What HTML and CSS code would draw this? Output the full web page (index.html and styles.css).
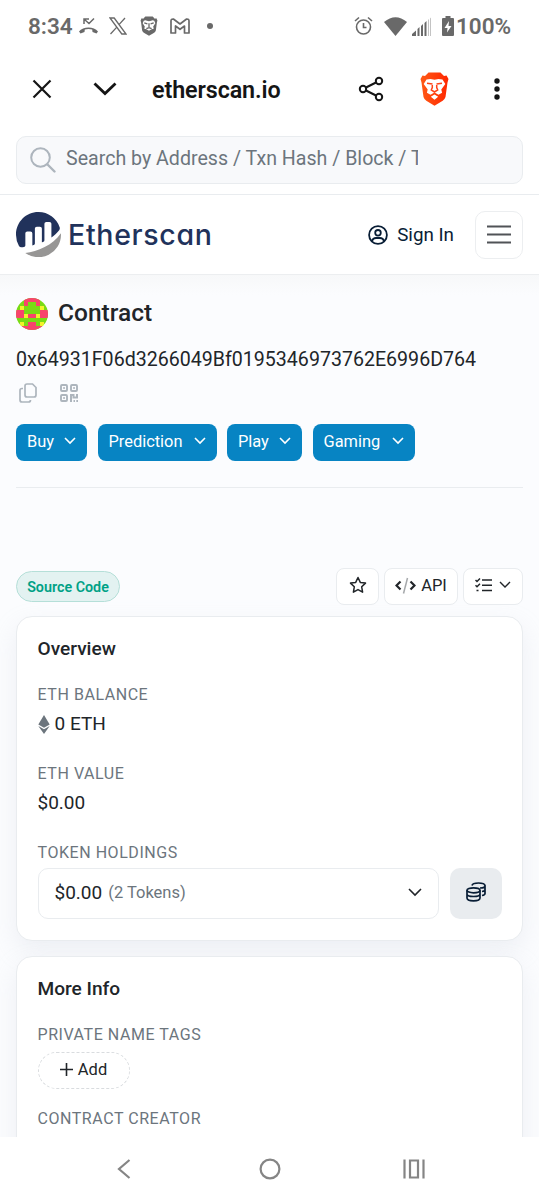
FILE: index.html
```html
<!DOCTYPE html>
<html lang="en">
<head>
<meta charset="utf-8">
<title>Contract | Etherscan</title>
<link rel="stylesheet" href="styles.css">
</head>
<body>
<div class="phone">
  <div class="status">
    <span class="clock">8:34</span>
    <svg class="st-call" width="21" height="18" viewBox="0 0 21 18"><path d="M1 14.500c4-5.500 15-5.500 19 0l-1.500 2-4-1.500-.3-2.600q-3.700-1-7.400 0l-.3 2.600-4 1.500z" fill="currentColor"/><path d="M6 7V2h5M6.500 2.500l4.500 4 5-5" fill="none" stroke="currentColor" stroke-width="1.500"/></svg>
    <svg class="st-x" width="18" height="18" viewBox="0 0 18 18" fill="none" stroke="currentColor" stroke-width="1.300"><path d="M1 1h4.200L17 17h-4.200zM16 1 10 7.600M7.600 10.400 1.500 17"/></svg>
    <svg class="st-brave" width="18" height="20" viewBox="0 0 34 38"><path d="M10 1h14l4 4 3-.5 2 4-1 4-2 15q-1 3-4 5l-9 5-9-5q-3-2-4-5L2 12.500 1 8.500l2-4 3 .5z" fill="currentColor"/><path d="M7 9q3-2 6 0l4 1 4-1q3-2 6 0l2 5-4 6 1 4-4 1-5 3-5-3-4-1 1-4-4-6z" fill="#fff"/><path d="m8 13 6 2M26 13l-6 2M17 14v8m-5 2 5-2 5 2" stroke="currentColor" stroke-width="2.500" fill="none"/></svg>
    <svg class="st-mail" width="20" height="16" viewBox="0 0 20 16"><path d="M1 3q0-2.200 2.400-2L10 6l6.600-5Q19 .8 19 3v12h-4.500V8L10 11.300 5.500 8v7H1z" fill="none" stroke="currentColor" stroke-width="1.700" stroke-linejoin="round"/></svg>
    <span class="st-dot"></span>
    <span class="grow"></span>
    <svg width="19" height="20" viewBox="0 0 19 20" fill="none" stroke="currentColor" stroke-width="1.600"><circle cx="9.500" cy="11" r="7"/><path d="M9.500 7v4.500h3M1 5l4-3.500M18 5l-4-3.500"/></svg>
    <svg class="st-wifi" width="23" height="19" viewBox="0 0 23 19"><path d="M0 5Q11.500-4.500 23 5L11.500 19z" fill="currentColor"/></svg>
    <svg class="st-signal" width="20" height="19" viewBox="0 0 20 19" fill="currentColor"><path d="M0 19v-2l4-3.500V19zM5.500 19v-7l2-2v9zM9 19V9l2-2v12zM12.500 19V6l2-2v15z"/><path d="M16 19V3l1-1v17zM18 19V1.500l1-1V19z" opacity=".4"/></svg>
    <svg class="st-batt" width="12" height="20" viewBox="0 0 12 20"><path d="M3.500 0h5v2H11q1 0 1 1v16q0 1-1 1H1q-1 0-1-1V3q0-1 1-1h2.500z" fill="currentColor"/><path d="M7 5 2.500 12H5.500L5 16.500 9.500 10h-3z" fill="#fff"/></svg>
    <span class="percent">100%</span>
  </div>

  <div class="browser">
    <svg width="20" height="20" viewBox="0 0 20 20"><path d="m1.500 1.500 17 17m0-17-17 17" stroke="currentColor" stroke-width="2.200"/></svg>
    <svg class="br-down" width="24" height="14" viewBox="0 0 24 14"><path d="m1.500 1.500 10.500 10 10.500-10" fill="none" stroke="currentColor" stroke-width="2.800"/></svg>
    <span class="host">etherscan.io</span>
    <span class="grow"></span>
    <svg width="26" height="26" viewBox="0 0 26 26" fill="none" stroke="currentColor" stroke-width="2"><circle cx="5" cy="13" r="3.200"/><circle cx="21" cy="5" r="3.200"/><circle cx="21" cy="21" r="3.200"/><path d="m8 11.500 10-5M8 14.500l10 5"/></svg>
    <svg class="br-brave" width="29" height="34" viewBox="0 0 29 34"><defs><linearGradient id="lion"><stop offset="0" stop-color="#ff5a16"/><stop offset="1" stop-color="#ff2600"/></linearGradient></defs><path d="M8.500.5h12l3.500 3.500 2.500-.5L28.500 7l-1 3.500L25.500 25q-.6 2.200-2.800 3.700l-8.200 5-8.200-5Q4.100 27.200 3.500 25L1.500 10.500.5 7l2-3.500L5 4z" fill="url(#lion)"/><path d="m6.500 7.500 4-.5 4 .8 4-.8 4 .5 2.800 4.500-4 5.500.8 3.300-3.600 2-4-2.300-4 2.300-3.600-2 .8-3.300-4-5.500zM10.800 24.800l3.700-2.300 3.700 2.300-3.700 3z" fill="#fff"/><path d="m7 11.200 5.500.8M22 11.200l-5.500.8M12.300 13v2.500l-1 2.500 3.200 2 3.200-2-1-2.500V13" fill="none" stroke="#ff4318" stroke-width="1.500"/></svg>
    <svg class="br-menu" width="6" height="22" viewBox="0 0 6 22" fill="currentColor"><circle cx="3" cy="3" r="2.700"/><circle cx="3" cy="11" r="2.700"/><circle cx="3" cy="19" r="2.700"/></svg>
  </div>

  <div class="search-area">
    <div class="search">
      <svg width="26" height="26" viewBox="0 0 26 26" fill="none" stroke="#adb5bd" stroke-width="2"><circle cx="10.500" cy="10.500" r="9.300"/><path d="m17.500 17.500 7 7" stroke-width="2.400" stroke-linecap="round"/></svg>
      <span class="placeholder">Search by Address / Txn Hash / Block / Token</span>
    </div>
  </div>

  <header class="site-head">
    <svg width="45" height="45" viewBox="0 0 293.775 293.671"><path d="M61.056 139.480a12.440 12.440 0 0 1 12.498-12.440l20.717.068a12.440 12.440 0 0 1 12.440 12.440v78.331c2.332-.691 5.328-1.430 8.605-2.200a10.368 10.368 0 0 0 7.993-10.090v-97.170a12.440 12.440 0 0 1 12.440-12.441h20.739a12.440 12.440 0 0 1 12.440 12.441v90.183s5.192-2.100 10.249-4.236a10.378 10.378 0 0 0 6.343-9.564V77.326a12.440 12.440 0 0 1 12.438-12.440h20.739a12.440 12.440 0 0 1 12.440 12.440v88.739c17.980-13.031 36.200-28.700 50.661-47.548a20.875 20.875 0 0 0 3.178-19.441A146.830 146.830 0 0 0 147.909.009C65.684-1.088-.009 65.571-.009 147.828a146.600 146.600 0 0 0 19.491 73.450 18.544 18.544 0 0 0 17.718 9.133c3.936-.346 8.837-.836 14.664-1.520a10.356 10.356 0 0 0 9.191-10.284z" fill="#21325b"/><path d="M60.600 266.900a146.833 146.833 0 0 0 233.083-118.900c0-3.381-.157-6.724-.382-10.049-53.642 80-152.686 117.400-232.701 128.949" fill="#979695"/></svg>
    <span class="brand">Etherscan</span>
    <span class="grow"></span>
    <svg width="20" height="20" viewBox="0 0 20 20" fill="none" stroke="#081d35" stroke-width="1.800"><circle cx="10" cy="10" r="8.900"/><circle cx="10" cy="7.800" r="2.800"/><path d="M4 16q1-3 4-3h4q3 0 4 3"/></svg>
    <span class="signin">Sign In</span>
    <span class="burger"><svg width="24" height="19" viewBox="0 0 24 19"><path d="M0 1.500h24M0 9.500h24M0 17.500h24" stroke="#505357" stroke-width="1.800"/></svg></span>
  </header>

  <main>
    <div class="title-row">
      <svg width="32" height="32" viewBox="0 0 8 8" shape-rendering="crispEdges"><path d="M0 0h8v8H0z" fill="#79db14"/><path d="M2 0h4v2H5V1H3v1H2zM0 3h2v2H0zM6 3h2v2H6zM3 4h2v1H3zM3 6h2v1h1v1H2V7h1zM0 7h2v1H0zM6 7h2v1H6z" fill="#f8446c"/><path d="M1 2h1v1H1zM6 2h1v1H6zM2 4h1v1H2zM5 4h1v1H5zM1 6h1v1H1zM6 6h1v1H6z" fill="#f3f32b"/></svg>
      <h1>Contract</h1>
    </div>
    <div class="address">0x64931F06d3266049Bf0195346973762E6996D764</div>
    <div class="tools">
      <svg width="18" height="20" viewBox="0 0 18 20" fill="none" stroke="#adb5bd" stroke-width="1.700"><path d="M8 1h5.500L17 4.500V12q0 2-2 2H8q-2 0-2-2V3q0-2 2-2zM4 5.500H3q-2 0-2 2V17q0 2 2 2h6.500q2 0 2-2"/></svg>
      <svg width="18" height="18" viewBox="0 0 18 18" fill="none" stroke="#adb5bd" stroke-width="1.900"><rect x="1" y="1" width="6" height="6" rx="1"/><rect x="11" y="1" width="6" height="6" rx="1"/><rect x="1" y="11" width="6" height="6" rx="1"/><path d="M3.300 4h1.500M13.300 4h1.500M3.300 14h1.500"/><path d="M11 18v-7h2.500v2.500H17V10M13.500 17h1.500M16.300 17H18" stroke-width="2"/></svg>
    </div>
    <div class="actions">
      <button class="buy">Buy<svg width="12" height="8" viewBox="0 0 12 8"><path d="m1 1 5 5 5-5"/></svg></button>
      <button class="prediction">Prediction<svg width="12" height="8" viewBox="0 0 12 8"><path d="m1 1 5 5 5-5"/></svg></button>
      <button class="play">Play<svg width="12" height="8" viewBox="0 0 12 8"><path d="m1 1 5 5 5-5"/></svg></button>
      <button class="gaming">Gaming<svg width="12" height="8" viewBox="0 0 12 8"><path d="m1 1 5 5 5-5"/></svg></button>
    </div>
    <div class="rule"></div>

    <div class="meta-row">
      <span class="badge">Source Code</span>
      <span class="grow"></span>
      <span class="chip star"><svg width="18" height="18" viewBox="0 0 18 18"><path d="m9 1.500 2.300 4.900 5.200.7-3.800 3.700.9 5.400L9 13.600l-4.600 2.600.9-5.400L1.500 7.100l5.200-.7z" fill="none" stroke="#212529" stroke-width="1.500" stroke-linejoin="round"/></svg></span>
      <span class="chip api"><svg width="21" height="17" viewBox="0 0 21 17" fill="none"><path d="m5.500 4.500-4 4 4 4m10-8 4 4-4 4" stroke="#212529" stroke-width="2.200"/><path d="m12.500 1-4 15.500" stroke="#a5a8ab" stroke-width="1.500"/></svg>API</span>
      <span class="chip list"><svg width="17" height="14" viewBox="0 0 17 14" fill="none" stroke="#212529" stroke-width="1.500"><path d="M7 2h10M7 7.300h10M7 12.600h10M.5 2l1.500 1.500L5 .5M.5 7.200 2 8.700l3-3M1.500 12.600h2"/></svg><svg width="12" height="8" viewBox="0 0 12 8" fill="none" stroke="#212529" stroke-width="1.400"><path d="m1 1 5 5 5-5"/></svg></span>
    </div>

    <section class="card overview">
      <h2>Overview</h2>
      <div class="label">ETH BALANCE</div>
      <div class="value"><svg width="12" height="19" viewBox="0 0 12 19"><path d="m6 0 5.700 9.500L6 12.700.3 9.500z" fill="#6c757d"/><path d="m.3 11 5.700 3.200 5.700-3.200L6 19z" fill="#6c757d"/></svg>0 ETH</div>
      <div class="label">ETH VALUE</div>
      <div class="value">$0.00</div>
      <div class="label">TOKEN HOLDINGS</div>
      <div class="holdings">
        <div class="select"><span class="amount">$0.00</span><span class="count">(2 Tokens)</span><span class="grow"></span><svg width="14" height="9" viewBox="0 0 14 9"><path d="m1 1 6 6 6-6" fill="none" stroke="#212529" stroke-width="1.600"/></svg></div>
        <div class="wallet"><svg width="20" height="20" viewBox="0 0 20 20" fill="none" stroke="#081d35" stroke-width="1.700"><ellipse cx="7.500" cy="8.300" rx="6.500" ry="2.500"/><path d="M1 8.300V16q0 2.800 6.500 2.800T14 16V8.300M1 12q0 2.500 6.500 2.500T14 12M6 3.500Q6.500 1 12.500 1T19 3.500 14 6M19 3.500v8q0 1.500-3 2M19 7.500q0 1.500-3 2"/></svg></div>
      </div>
    </section>

    <section class="card more">
      <h2>More Info</h2>
      <div class="label">PRIVATE NAME TAGS</div>
      <div class="add"><svg width="13" height="13" viewBox="0 0 13 13"><path d="M6.500 0v13M0 6.500h13" stroke="#212529" stroke-width="1.600"/></svg>Add</div>
      <div class="label">CONTRACT CREATOR</div>
    </section>
  </main>

  <nav class="sysnav">
    <svg width="14" height="20" viewBox="0 0 14 20"><path d="m12.500 1-10.500 9 10.500 9" fill="none" stroke="#858585" stroke-width="2.200"/></svg>
    <svg class="home" width="22" height="22" viewBox="0 0 22 22"><circle cx="11" cy="11" r="9.400" fill="none" stroke="#858585" stroke-width="2.200"/></svg>
    <svg width="22" height="20" viewBox="0 0 22 20"><path d="M1.500.5v19M20.500.5v19M7 1.500h8v17H7z" fill="none" stroke="#858585" stroke-width="2.200"/></svg>
  </nav>
</div>
</body>
</html>
```

FILE: styles.css
```css
* { box-sizing: border-box; }
body { margin: 0; background: #fff; color: #212529; font-family: Roboto, "Liberation Sans", sans-serif; }
svg { display: block; flex: none; }
.phone { width: 539px; height: 1200px; display: flex; flex-direction: column; overflow: hidden; white-space: nowrap; }
.grow { flex: 1; }

.status { height: 52px; flex: none; display: flex; align-items: center; padding: 0 29px 0 28px; color: #696969; font-size: 22.500px; font-weight: 600; }
.clock { width: 45px; }
.st-call { margin-left: 5px; }
.st-x { margin-left: 10px; }
.st-brave { margin-left: 13px; }
.st-mail { margin-left: 12px; }
.st-dot { width: 6px; height: 6px; border-radius: 50%; background: currentColor; margin-left: 17px; }
.st-wifi { margin-left: 11px; }
.st-signal { margin-left: 5px; }
.st-batt { margin-left: 10px; }
.percent { width: 54px; margin-left: 2px; }

.browser { height: 74px; flex: none; display: flex; align-items: center; padding: 0 39px 0 32px; color: #151515; }
.br-down { margin-left: 41px; }
.host { margin: 2px 0 0 35px; font-size: 23.300px; font-weight: 600; letter-spacing: -.1px; }
.br-brave { margin-left: 36px; }
.br-menu { margin-left: 45px; }

.search-area { height: 69px; flex: none; padding: 10px 16px 0; border-bottom: 1px solid #e9ecef; }
.search { height: 48px; display: flex; align-items: center; padding: 0 14px 0 13px; border: 1px solid #e9ecef; border-radius: 10px; background: #f8f9fb; }
.placeholder { width: 352px; margin-left: 10px; overflow: hidden; color: #6c757d; font-size: 19.600px; line-height: 28px; margin-top: -2px; }

.site-head { height: 80px; flex: none; display: flex; align-items: center; padding: 0 16px; border-bottom: 1px solid #eceef0; }
.brand { margin-left: 7px; color: #21325b; font-family: Inter, "Open Sans", sans-serif; font-size: 28.500px; font-weight: 500; letter-spacing: .7px; font-feature-settings: "cv11"; }
.signin { margin-left: 9px; color: #081d35; font-size: 18.800px; }
.burger { width: 48px; height: 48px; margin-left: 21px; display: flex; align-items: center; justify-content: center; border: 1px solid #eceef0; border-radius: 10px; }

main { flex: 1; min-height: 0; overflow: hidden; padding: 0 16px; background: linear-gradient(#f7f8f9, #fbfcfe 20px); }
.title-row { height: 32px; margin-top: 23px; display: flex; align-items: center; }
.title-row svg { border-radius: 50%; }
h1 { margin: -3px 0 0 10px; font-size: 24.500px; line-height: 30px; font-weight: 500; }
.address { margin-top: 15px; font-size: 19.600px; line-height: 30px; }
.tools { height: 20px; margin: 8px 0 0 3px; display: flex; align-items: center; gap: 23px; }
.actions { display: flex; margin-top: 21px; gap: 10.500px; }
.actions button { height: 37px; padding: 0 11px 3px; display: flex; align-items: center; justify-content: space-between; border: 0; border-radius: 8px; background: #0784c3; color: #fff; font: 16.400px Roboto, sans-serif; }
.actions path { fill: none; stroke: #fff; stroke-width: 1.600; }
.actions .buy { width: 71px; }
.actions .prediction { width: 119px; }
.actions .play { width: 75px; }
.actions .gaming { width: 102px; }
.rule { height: 1px; margin-top: 26px; background: #e9ecef; }

.meta-row { height: 37px; margin-top: 80px; display: flex; align-items: center; gap: 5px; }
.badge { width: 104px; height: 31px; display: flex; align-items: center; justify-content: center; border: 1px solid #b5dfd8; border-radius: 16px; background: #e3f2f1; color: #00a186; font-size: 14.300px; font-weight: 600; }
.chip { height: 37px; display: flex; align-items: center; justify-content: center; padding-bottom: 3px; border: 1px solid #e9ecef; border-radius: 8px; background: #fff; font-size: 16.500px; }
.star { width: 43px; }
.api { width: 74px; gap: 5px; }
.list { width: 60px; gap: 7px; }

.card { border: 1px solid #e9ecef; border-radius: 16px; background: #fff; padding: 0 20px 0 20.500px; box-shadow: 0 10px 24px rgba(189, 197, 209, .22); }
.overview { height: 325px; margin-top: 11px; }
.more { height: 260px; margin-top: 15px; }
h2 { margin: 18px 0 0; font-size: 19.100px; line-height: 28px; font-weight: 500; }
.label { margin-top: 22px; color: #6c757d; font-size: 16px; line-height: 20px; letter-spacing: .55px; }
.value { display: flex; align-items: center; gap: 5px; margin-top: 5px; font-size: 19px; line-height: 28px; }
.value + .label { margin-top: 26px; }
.holdings { display: flex; gap: 11px; margin-top: 5px; }
.select { width: 402px; height: 51px; display: flex; align-items: center; padding: 0 16px 3px; border: 1px solid #e9ecef; border-radius: 10px; }
.amount { font-size: 19px; }
.count { margin-left: 6px; color: #6c757d; font-size: 16.500px; }
.wallet { width: 52px; height: 51px; display: flex; align-items: center; justify-content: center; padding-bottom: 3px; border-radius: 10px; background: #e9ecef; }
.add { width: 92px; height: 37px; margin-top: 7px; display: flex; align-items: center; justify-content: center; gap: 5px; padding-bottom: 3px; border: 1px dashed #d9dcdf; border-radius: 19px; font-size: 16.500px; }
.add + .label { margin-top: 20px; }

.sysnav { height: 63px; flex: none; display: flex; align-items: center; justify-content: space-between; padding: 0 114px 0 117px; background: #fff; }
.home { margin-left: 5px; }
```
